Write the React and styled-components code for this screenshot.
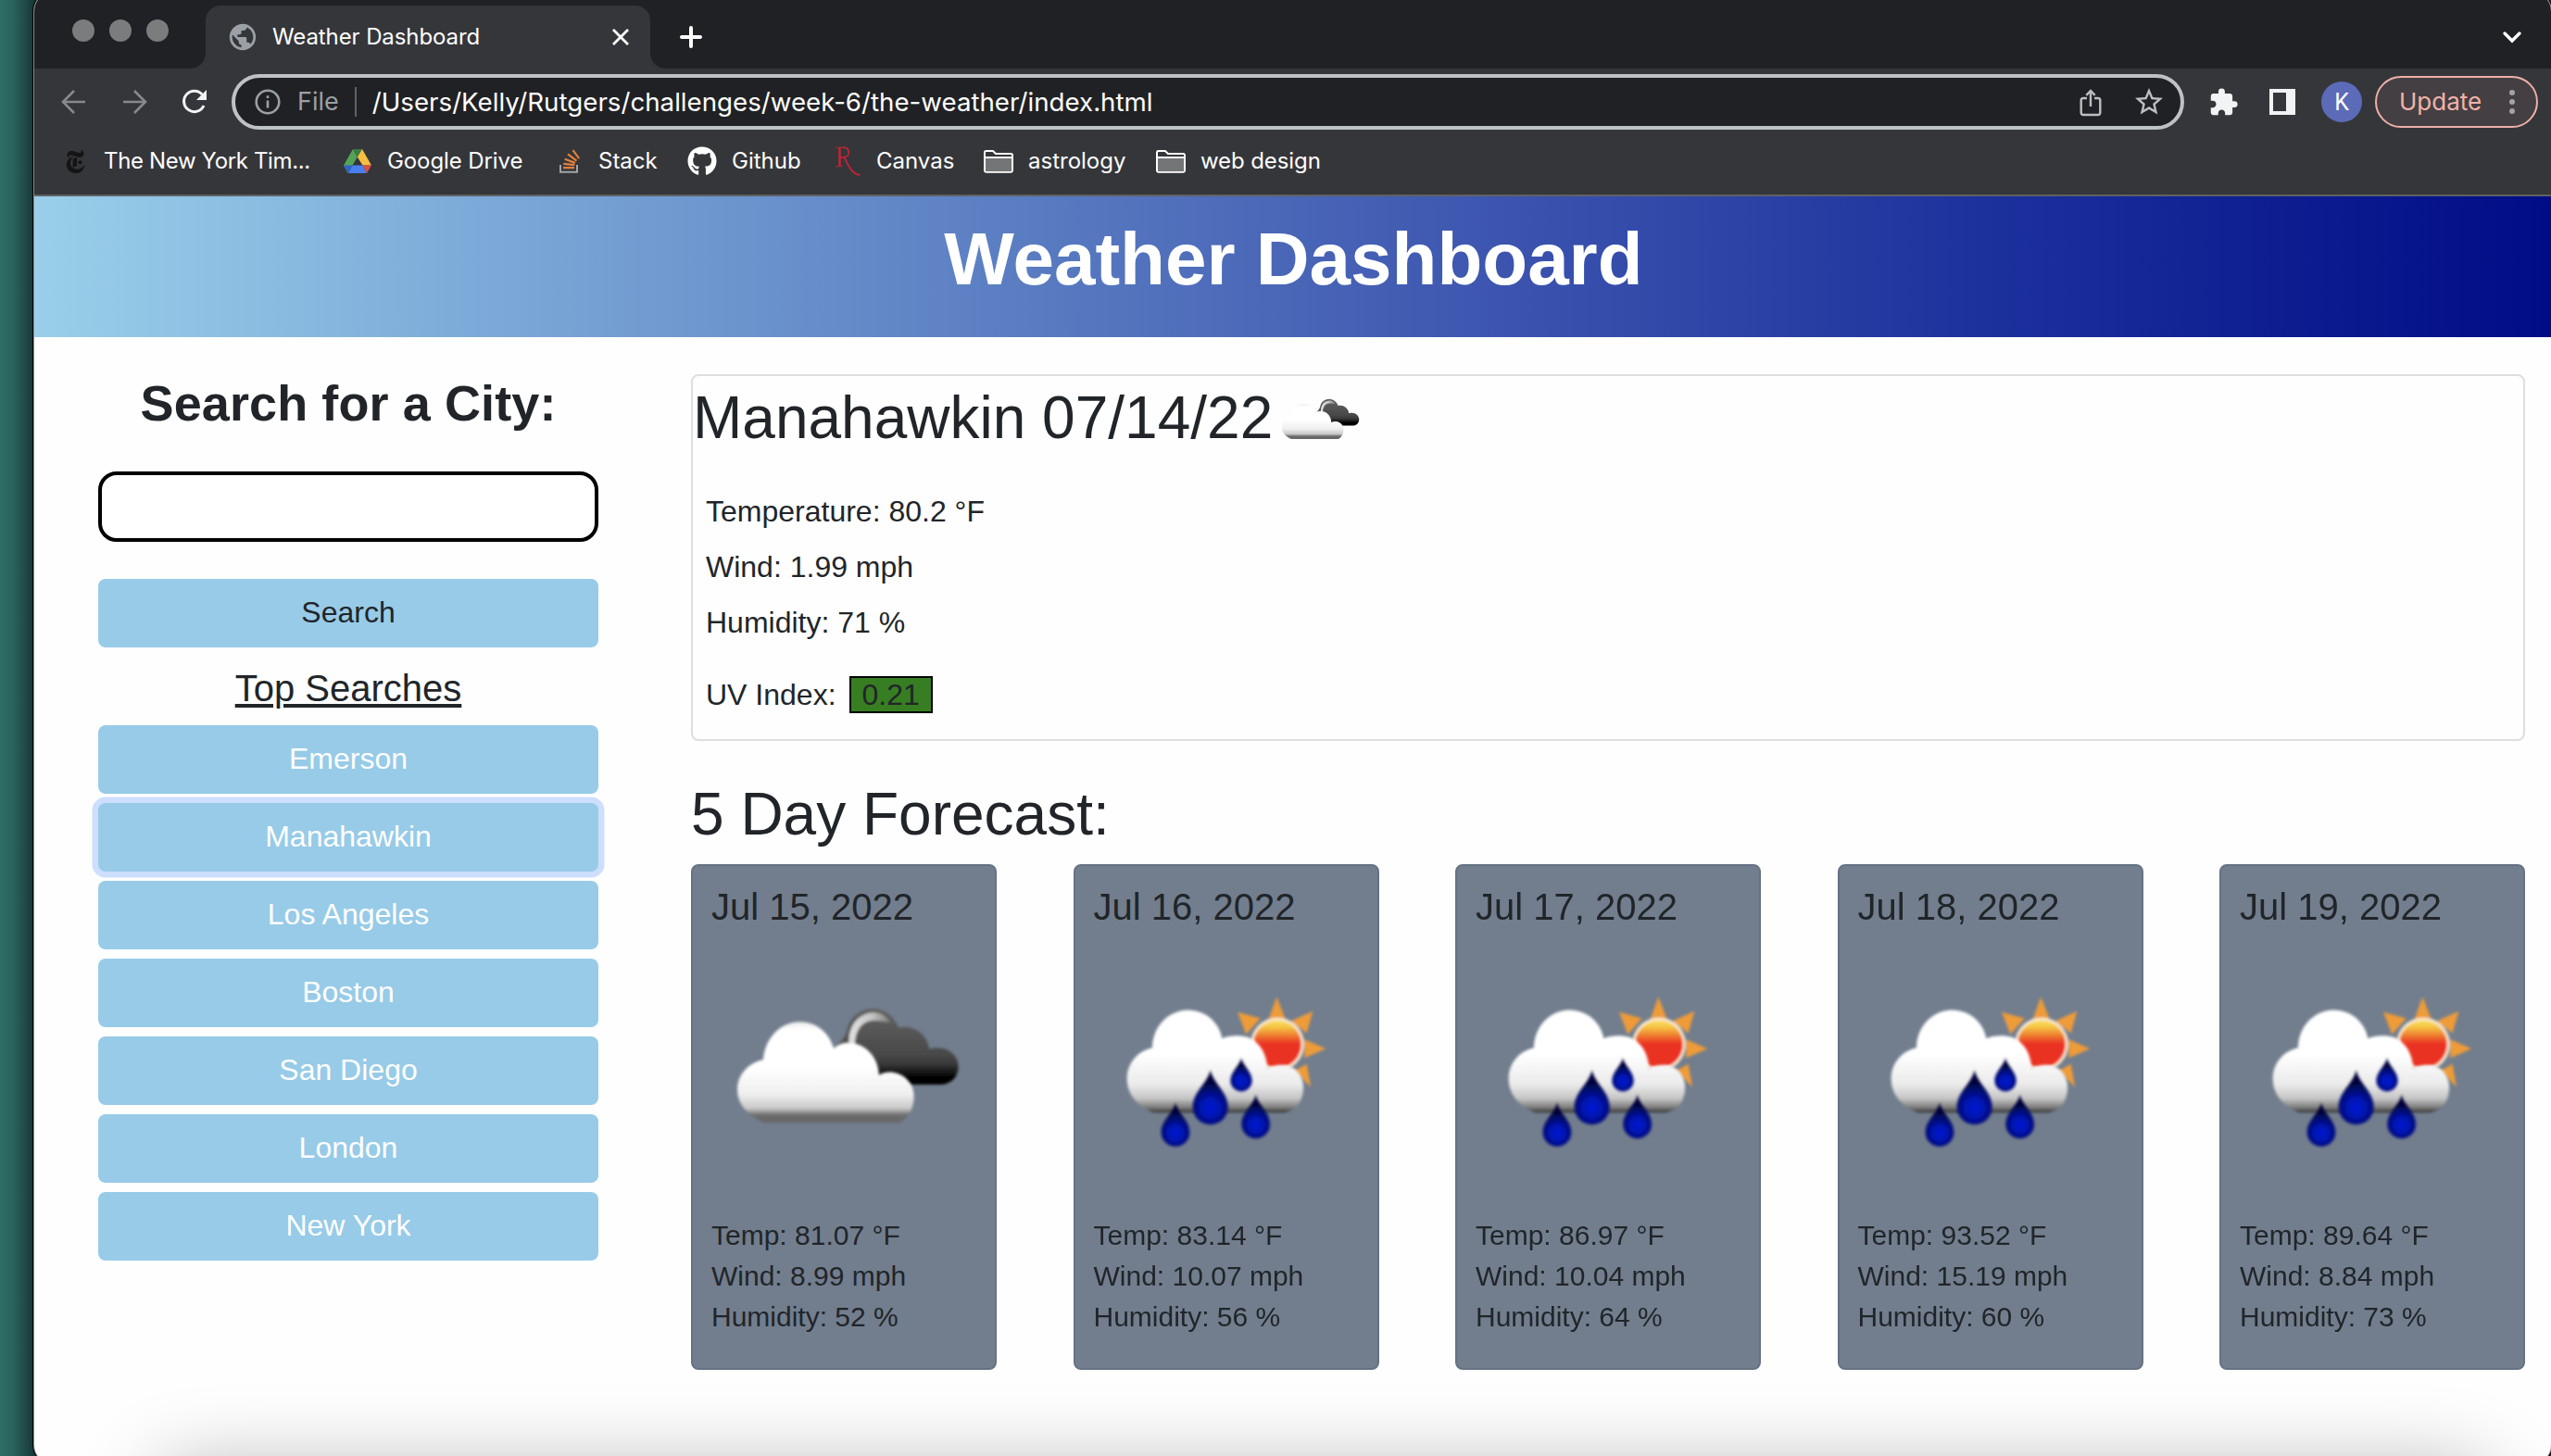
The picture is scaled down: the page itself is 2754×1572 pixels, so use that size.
import React from "react";
import styled, { createGlobalStyle, css } from "styled-components";
import { SiNewyorktimes } from "react-icons/si";
import { FaGithub } from "react-icons/fa";
import { MdExtension, MdPublic, MdStarOutline } from "react-icons/md";

const GlobalStyle = createGlobalStyle`
  * { box-sizing: border-box; }
  body { margin: 0; overflow: hidden; background: #2f6f69; }
  h1, h2, h3, h4, p, ul { margin: 0; padding: 0; font-weight: 400; }
  svg { display: block; flex: none; }
`;

const pageFont = `"Liberation Sans", Arial, sans-serif`;
const chromeFont = `Inter, Roboto, sans-serif`;

/* ---------- Desktop and window ---------- */

const Desktop = styled.div`
  position: relative;
  width: 2754px;
  height: 1572px;
  padding-left: 37px;
  overflow: hidden;
  background: linear-gradient(90deg, #2f6d67 0, #2a625c 14px, #1f4b47 27px, #19393a 35px, #19393a 100%);
`;

const BrowserWindow = styled.div`
  display: flex;
  flex-direction: column;
  height: 1588px;
  margin-top: -8px;
  border-radius: 20px;
  overflow: hidden;
  background: #fefefe;
  box-shadow: 0 0 0 1px #8a8d8c, 0 0 0 2px #000;
`;

const DockShadow = styled.div`
  position: absolute;
  left: 175px;
  right: 72px;
  top: 1590px;
  height: 200px;
  box-shadow: 0 0 90px rgba(0, 0, 0, 0.33);
`;

/* ---------- Browser chrome ---------- */

const TabStrip = styled.div`
  display: flex;
  align-items: flex-end;
  height: 82px;
  padding-right: 30px;
  background: #202124;
`;

const Lights = styled.div`
  display: flex;
  gap: 16px;
  width: 185px;
  height: 53px;
  padding-left: 41px;
`;

const StripCell = styled.div`
  display: flex;
  align-items: center;
  height: 68px;
  margin-left: ${(p) => p.$push};
`;

const Light = styled.span`
  width: 24px;
  height: 24px;
  border-radius: 50%;
  background: #7b7c7e;
`;

const Tab = styled.div`
  position: relative;
  display: flex;
  align-items: center;
  width: 480px;
  height: 68px;
  padding: 0 23px 0 23px;
  border-radius: 16px 16px 0 0;
  background: #35363a;

  &::before,
  &::after {
    content: "";
    position: absolute;
    bottom: 0;
    width: 16px;
    height: 16px;
  }
  &::before {
    left: -16px;
    background: radial-gradient(circle at 0 0, transparent 15.5px, #35363a 16px);
  }
  &::after {
    right: -16px;
    background: radial-gradient(circle at 100% 0, transparent 15.5px, #35363a 16px);
  }
`;

const TabTitle = styled.span`
  flex: 1;
  margin-left: 15px;
  font: 400 24px/30px ${chromeFont};
  letter-spacing: -0.1px;
  color: #fff;
  white-space: nowrap;
`;

const Toolbar = styled.div`
  display: flex;
  align-items: center;
  height: 72px;
  padding: 0 14px 0 29px;
  background: #35363a;
`;

const NavButtons = styled.div`
  display: flex;
  align-items: center;
  gap: 37px;
  width: 184px;
`;

const AddressBar = styled.div`
  display: flex;
  align-items: center;
  width: 2108px;
  height: 60px;
  padding: 0 16px 0 21px;
  border: 4px solid #bfc2c5;
  border-radius: 30px;
  background: #202124;
`;

const Scheme = styled.span`
  margin-left: 18px;
  padding-right: 17px;
  border-right: 2px solid #5f6368;
  font: 400 27px/32px ${chromeFont};
  color: #9aa0a6;
`;

const Url = styled.span`
  flex: 1;
  margin-left: 17px;
  font: 400 27.7px/32px ${chromeFont};
  color: #fff;
  white-space: nowrap;
`;

const StarIcon = styled(MdStarOutline)`
  width: 36px;
  height: 36px;
  margin-left: 33px;
  color: #bdbec0;
`;

const PuzzleIcon = styled(MdExtension)`
  width: 33px;
  height: 33px;
  margin-right: 33px;
  color: #f1f3f4;
`;

const Actions = styled.div`
  display: flex;
  align-items: center;
  margin-left: auto;
`;

const Avatar = styled.span`
  display: flex;
  align-items: center;
  justify-content: center;
  width: 44px;
  height: 44px;
  margin: 0 14px 0 28px;
  border-radius: 50%;
  background: #5c6bb8;
  color: #fff;
  font: 400 25px/1 Roboto, sans-serif;
`;

const UpdatePill = styled.span`
  display: flex;
  align-items: center;
  justify-content: space-between;
  width: 176px;
  height: 56px;
  padding: 0 23px 0 24px;
  border: 2px solid #eeb0a8;
  border-radius: 28px;
  background: #443f42;
  color: #f0b3ab;
  font: 400 26px/1 ${chromeFont};
`;

const BookmarksBar = styled.div`
  display: flex;
  align-items: center;
  height: 66px;
  padding: 0 0 8px 32px;
  border-bottom: 2px solid #5f6164;
  background: #35363a;
`;

const Bookmark = styled.div`
  display: flex;
  align-items: center;
  gap: ${(p) => p.$gap}px;
  width: ${(p) => p.$width}px;
  font: 400 24px/30px ${chromeFont};
  letter-spacing: ${(p) => p.$tracking || 0}px;
  color: #fff;
  white-space: nowrap;
`;

/* ---------- Web page ---------- */

const Banner = styled.header`
  height: 152px;
  padding: 20px 0 0 2px;
  background: linear-gradient(90deg, #99cfea 0, #6d96ce 27%, #4059b1 56%, #1c309c 78%, #000c86 100%);
  text-align: center;
`;

const BannerTitle = styled.h1`
  font: 700 80px/96px ${pageFont};
  color: #fff;
`;

const Page = styled.main`
  display: flex;
  flex: 1;
  color: #212529;
  font-family: ${pageFont};
`;

const Sidebar = styled.aside`
  display: flex;
  flex-direction: column;
  width: 609px;
  margin-right: 100px;
  padding: 39px 0 0 69px;
  text-align: center;
`;

const SidebarTitle = styled.h2`
  font: 700 54px/64px ${pageFont};
  letter-spacing: 0.1px;
`;

const CityInput = styled.input`
  height: 76px;
  margin: 42px 0 40px;
  border: 4px solid #000;
  border-radius: 20px;
  background: #fff;
`;

const CityButton = styled.button`
  height: 74px;
  margin: 0;
  padding: 0 0 3px;
  border: 0;
  border-radius: 8px;
  background: #97cbe8;
  color: ${(p) => (p.$dark ? "#212529" : "#fff")};
  font: 400 32px/48px ${pageFont};
  ${(p) =>
    p.$focused &&
    css`
      box-shadow: 0 0 0 6.5px #cddefe;
    `}
`;

const TopSearches = styled.h3`
  margin: 20px 0 16px;
  font: 400 40px/48px ${pageFont};
  text-decoration: underline;
  text-decoration-thickness: 4px;
  text-underline-offset: 3px;
`;

const CityList = styled.div`
  display: flex;
  flex-direction: column;
  gap: 10px;
`;

const Content = styled.section`
  width: 1980px;
  padding-top: 40px;
`;

const CurrentCard = styled.section`
  height: 396px;
  border: 2px solid #dedede;
  border-radius: 8px;
`;

const CurrentTitle = styled.h2`
  display: flex;
  align-items: center;
  height: 96px;
  font: 400 64px/77px ${pageFont};
  white-space: pre;
`;

const CurrentTitleText = styled.span`
  padding-bottom: 5px;
`;

const CurrentStat = styled.p`
  display: flex;
  align-items: center;
  height: 60px;
  padding-left: 14px;
  margin-top: ${(p) => p.$top || 0}px;
  font: 400 32px/48px ${pageFont};
`;

const UvBadge = styled.span`
  width: 90px;
  height: 40px;
  margin-left: 14px;
  padding-left: 12px;
  border: 2px solid #000;
  background: #377e22;
  line-height: 36px;
`;

const ForecastTitle = styled.h2`
  margin: 41px 0 15px;
  font: 400 64px/77px ${pageFont};
`;

const ForecastRow = styled.div`
  display: flex;
  justify-content: space-between;
`;

const DayCard = styled.article`
  display: flex;
  flex-direction: column;
  width: 330px;
  height: 546px;
  padding: 20px 20px;
  border: 2px solid #667284;
  border-radius: 8px;
  background: #727e8e;
`;

const DayDate = styled.h3`
  font: 400 40px/48px ${pageFont};
`;

const DayIcon = styled.div`
  margin: 9px 0 14px;
`;

const DayStat = styled.p`
  font: 400 30px/44px ${pageFont};
`;

/* ---------- Icons ---------- */

const CloseIcon = () => (
  <svg width="18" height="18" viewBox="0 0 18 18" stroke="#fff" strokeWidth="2.800">
    <path d="M1 1l16 16M17 1L1 17" />
  </svg>
);

const PlusIcon = () => (
  <svg width="24" height="24" viewBox="0 0 24 24" stroke="#fff" strokeWidth="4" strokeLinecap="round">
    <path d="M12 2v20M2 12h20" />
  </svg>
);

const ChevronIcon = () => (
  <svg width="24" height="14" viewBox="0 0 24 14" fill="none" stroke="#fff" strokeWidth="3.400" strokeLinecap="round">
    <path d="M4 3l8 8 8-8" />
  </svg>
);

const ArrowIcon = ({ flip }) => (
  <svg width="28" height="28" viewBox="0 0 28 28" fill="none" stroke="#87898c" strokeWidth="2.600">
    <path d={flip ? "M2 14h23M14 2l12 12-12 12" : "M26 14H3M14 2L2 14l12 12"} />
  </svg>
);

const ReloadIcon = () => (
  <svg width="28" height="28" viewBox="0 0 28 28">
    <path d="M24 18a11.200 11.200 0 1 1-1.800-12" fill="none" stroke="#f1f3f4" strokeWidth="3" />
    <path d="M27 1v11H16z" fill="#f1f3f4" />
  </svg>
);

const InfoIcon = () => (
  <svg width="28" height="28" viewBox="0 0 28 28">
    <circle cx="14" cy="14" r="12.300" fill="none" stroke="#9aa0a6" strokeWidth="2.600" />
    <path d="M14 12.500v8M14 7.300v2.600" stroke="#9aa0a6" strokeWidth="2.600" />
  </svg>
);

const ShareIcon = () => (
  <svg width="24" height="32" viewBox="0 0 24 32" fill="none" stroke="#bdbec0" strokeWidth="2.400">
    <path d="M8 12H4a2.300 2.300 0 0 0-2.300 2.300v13.400A2.300 2.300 0 0 0 4 30h16a2.300 2.300 0 0 0 2.300-2.300V14.300a2.300 2.300 0 0 0-2.300-2.300h-4" />
    <path d="M12 21V4M7.300 8.800L12 4l4.700 4.800" />
  </svg>
);

const SidePanelIcon = () => (
  <svg width="28" height="28" viewBox="0 0 28 28">
    <path fillRule="evenodd" d="M0 0h28v28H0zM4 4v20h14V4z" fill="#f1f3f4" />
  </svg>
);

const DotsIcon = () => (
  <svg width="6" height="28" viewBox="0 0 6 28" fill="#a3a2a4">
    <circle cx="3" cy="4" r="3" />
    <circle cx="3" cy="14" r="3" />
    <circle cx="3" cy="24" r="3" />
  </svg>
);

const DriveIcon = () => (
  <svg width="30" height="26" viewBox="0 0 30 26">
    <path d="M10 0L0 17.500 4.500 26l10.300-17.500z" fill="#53a458" />
    <path d="M10 0h10l-5.200 8.500z" fill="#3a7d44" />
    <path d="M20 0l10 17.500h-9.500L14.800 8.500z" fill="#f3be42" />
    <path d="M9.500 17.500h11L25 26H5z" fill="#4a80ec" />
    <path d="M0 17.500h9.500L5 26z" fill="#2f62c9" />
    <path d="M20.500 17.500H30L25 26z" fill="#dc5040" />
  </svg>
);

const StackIcon = () => (
  <svg width="22" height="26" viewBox="0 0 22 26" fill="none">
    <path d="M1 17v7.800h18V17" stroke="#a2a4a7" strokeWidth="2" />
    <path d="M4 20.200h12M4.300 15.800l12 1.300M5.700 10.700l11.200 4.200M9 5.300l9.500 7.400M14.500 1.200l6.700 9" stroke="#e2813c" strokeWidth="2.200" />
  </svg>
);

const RutgersIcon = () => (
  <svg width="28" height="32" viewBox="0 0 28 32" fill="none" stroke="#c02536">
    <path d="M0.500 1.200h9M0.500 21.700h7" strokeWidth="1" />
    <path d="M4.500 1.500v20" strokeWidth="2.600" />
    <path d="M8 1.200c4.500 0 6.300 2.200 6.300 5.200s-2.300 5.500-6.300 5.500H5" strokeWidth="1.700" />
    <path d="M9.500 12c4 8 7.500 17.500 17 19" strokeWidth="1.900" />
  </svg>
);

const FolderIcon = () => (
  <svg width="32" height="25" viewBox="0 0 32 25">
    <path d="M1 22V2.500A1.500 1.500 0 0 1 2.500 1H10l3 3h16.500A1.500 1.500 0 0 1 31 5.500V22a1.800 1.800 0 0 1-1.800 1.800H2.800A1.800 1.800 0 0 1 1 22z" fill="#35363a" stroke="#fff" strokeWidth="2" />
    <path d="M2 9h28v14H2z" fill="#747577" />
    <path d="M1 8h30" stroke="#fff" strokeWidth="2" />
  </svg>
);

const CloudsIcon = ({ size, id }) => (
  <svg width={size} height={size} viewBox="0 0 286 286">
    <defs>
      <linearGradient id={`${id}-front`} gradientUnits="userSpaceOnUse" x1="0" y1="100" x2="0" y2="425">
        <stop offset="0" stopColor="#ececec" />
        <stop offset="0.080" stopColor="#fff" />
        <stop offset="0.450" stopColor="#fff" />
        <stop offset="0.720" stopColor="#efefef" />
        <stop offset="0.860" stopColor="#c8c8c8" />
        <stop offset="0.930" stopColor="#6a6a6a" />
        <stop offset="1" stopColor="#666" />
      </linearGradient>
      <linearGradient id={`${id}-back`} gradientUnits="userSpaceOnUse" x1="0" y1="60" x2="0" y2="305">
        <stop offset="0" stopColor="#626262" />
        <stop offset="0.600" stopColor="#484848" />
        <stop offset="0.720" stopColor="#383838" />
        <stop offset="0.880" stopColor="#050505" />
        <stop offset="1" stopColor="#000" />
      </linearGradient>
      <linearGradient id={`${id}-rim`} gradientUnits="userSpaceOnUse" x1="410" y1="0" x2="545" y2="0">
        <stop offset="0" stopColor="#e2e2e2" />
        <stop offset="0.550" stopColor="#c4c4c4" />
        <stop offset="1" stopColor="#7a7a7a" />
      </linearGradient>
      <filter id={`${id}-soft`} x="-10%" y="-10%" width="120%" height="120%">
        <feGaussianBlur stdDeviation="5" />
      </filter>
    </defs>
    <g transform="translate(12 58) scale(0.33333)">
      <g filter={`url(#${id}-soft)`}>
        <path
          d="M360 190C385 160 400 150 405 120C415 80 450 56 488 56C528 58 555 82 570 118C615 108 662 135 670 188C720 172 762 202 764 242C764 278 740 303 705 303L600 303L480 280Z"
          fill={`url(#${id}-back)`}
        />
        <path d="M412 180C402 130 430 72 490 70C512 70 530 82 545 102C510 96 488 92 468 100C438 112 428 145 428 185Z" fill={`url(#${id}-rim)`} />
      </g>
      <g filter={`url(#${id}-soft)`}>
        <path
          d="M135 427C88 405 48 372 48 318C48 270 85 232 132 222C138 150 190 100 250 100C305 100 345 135 360 185C375 172 395 166 415 168C465 172 505 215 507 272C520 264 540 261 555 264C595 271 622 305 620 345C618 385 600 412 572 427Z"
          fill={`url(#${id}-front)`}
        />
      </g>
    </g>
  </svg>
);

const Drop = ({ x, y, r, fill }) => (
  <path
    transform={`translate(${x} ${y}) scale(${r})`}
    d="M0 -2.050C0.150 -1.300 1 -0.800 1 0.050A1 1 0 0 1 -1 0.050C-1 -0.800 -0.150 -1.300 0 -2.050Z"
    fill={fill}
  />
);

const RainIcon = ({ size, id }) => (
  <svg width={size} height={size} viewBox="0 0 286 286">
    <defs>
      <linearGradient id={`${id}-cloud`} gradientUnits="userSpaceOnUse" x1="0" y1="155" x2="0" y2="485">
        <stop offset="0" stopColor="#fff" />
        <stop offset="0.420" stopColor="#fff" />
        <stop offset="0.720" stopColor="#ebebeb" />
        <stop offset="0.860" stopColor="#c6c6c6" />
        <stop offset="0.950" stopColor="#7c7c7c" />
        <stop offset="1" stopColor="#333" />
      </linearGradient>
      <linearGradient id={`${id}-sun`} gradientUnits="userSpaceOnUse" x1="0" y1="183" x2="0" y2="340">
        <stop offset="0" stopColor="#f8e261" />
        <stop offset="0.160" stopColor="#f6c544" />
        <stop offset="0.340" stopColor="#ee7a2e" />
        <stop offset="0.500" stopColor="#ea3323" />
        <stop offset="1" stopColor="#ea3323" />
      </linearGradient>
      <radialGradient id={`${id}-drop`} gradientUnits="userSpaceOnUse" cx="0" cy="0.100" r="1.400">
        <stop offset="0" stopColor="#001ad6" />
        <stop offset="0.350" stopColor="#0015b4" />
        <stop offset="0.720" stopColor="#000b74" />
        <stop offset="1" stopColor="#00063c" />
      </radialGradient>
      <filter id={`${id}-soft`} x="-10%" y="-10%" width="120%" height="120%">
        <feGaussianBlur stdDeviation="4.500" />
      </filter>
    </defs>
    <g transform="translate(9 27.500) scale(0.33333)">
      <g filter={`url(#${id}-soft)`}>
        <path
          d="M565 110L594 185H538ZM438 160L512 180L466 232ZM682 157L662 228L612 188ZM724 278L655 308V248ZM675 402L622 350L662 328Z"
          fill="#ee9b38"
        />
        <circle cx="567" cy="264" r="82" fill={`url(#${id}-sun)`} stroke="#fbe9cd" strokeWidth="9" />
      </g>
      <g filter={`url(#${id}-soft)`}>
        <path
          d="M165 485C108 462 80 422 80 375C80 325 115 285 162 275C163 205 215 153 278 153C335 153 380 195 388 245C400 238 430 235 450 237C500 241 532 285 535 342C560 328 600 325 625 345C650 365 656 400 648 430C640 462 620 480 590 485Z"
          fill={`url(#${id}-cloud)`}
        />
      </g>
      <g filter={`url(#${id}-soft)`}>
        <Drop x={350} y={464} r={57} fill={`url(#${id}-drop)`} />
        <Drop x={237} y={547} r={46} fill={`url(#${id}-drop)`} />
        <Drop x={497} y={521} r={46} fill={`url(#${id}-drop)`} />
        <Drop x={450} y={380} r={35} fill={`url(#${id}-drop)`} />
      </g>
    </g>
  </svg>
);

/* ---------- Data ---------- */

const bookmarks = [
  { label: "The New York Tim...", icon: <SiNewyorktimes size={25} color="#141414" />, gap: 18, width: 302, tracking: -0.36 },
  { label: "Google Drive", icon: <DriveIcon />, gap: 17, width: 233, tracking: -0.1 },
  { label: "Stack", icon: <StackIcon />, gap: 20, width: 138 },
  { label: "Github", icon: <FaGithub size={32} color="#fff" />, gap: 16, width: 160 },
  { label: "Canvas", icon: <RutgersIcon />, gap: 16, width: 160 },
  { label: "astrology", icon: <FolderIcon />, gap: 16, width: 186 },
  { label: "web design", icon: <FolderIcon />, gap: 16, width: 200, tracking: -0.1 },
];

const cities = ["Emerson", "Manahawkin", "Los Angeles", "Boston", "San Diego", "London", "New York"];

const forecast = [
  { date: "Jul 15, 2022", Icon: CloudsIcon, temp: "81.07", wind: "8.99", humidity: 52 },
  { date: "Jul 16, 2022", Icon: RainIcon, temp: "83.14", wind: "10.07", humidity: 56 },
  { date: "Jul 17, 2022", Icon: RainIcon, temp: "86.97", wind: "10.04", humidity: 64 },
  { date: "Jul 18, 2022", Icon: RainIcon, temp: "93.52", wind: "15.19", humidity: 60 },
  { date: "Jul 19, 2022", Icon: RainIcon, temp: "89.64", wind: "8.84", humidity: 73 },
];

export default function App() {
  return (
    <Desktop>
      <GlobalStyle />
      <BrowserWindow>
        <TabStrip>
          <Lights>
            <Light />
            <Light />
            <Light />
          </Lights>
          <Tab>
            <MdPublic size={34} color="#9aa0a6" />
            <TabTitle>Weather Dashboard</TabTitle>
            <CloseIcon />
          </Tab>
          <StripCell $push="32px">
            <PlusIcon />
          </StripCell>
          <StripCell $push="auto">
            <ChevronIcon />
          </StripCell>
        </TabStrip>

        <Toolbar>
          <NavButtons>
            <ArrowIcon />
            <ArrowIcon flip />
            <ReloadIcon />
          </NavButtons>
          <AddressBar>
            <InfoIcon />
            <Scheme>File</Scheme>
            <Url>/Users/Kelly/Rutgers/challenges/week-6/the-weather/index.html</Url>
            <ShareIcon />
            <StarIcon />
          </AddressBar>
          <Actions>
            <PuzzleIcon />
            <SidePanelIcon />
            <Avatar>K</Avatar>
            <UpdatePill>
              Update
              <DotsIcon />
            </UpdatePill>
          </Actions>
        </Toolbar>

        <BookmarksBar>
          {bookmarks.map((b) => (
            <Bookmark key={b.label} $gap={b.gap} $width={b.width} $tracking={b.tracking}>
              {b.icon}
              {b.label}
            </Bookmark>
          ))}
        </BookmarksBar>

        <Banner>
          <BannerTitle>Weather Dashboard</BannerTitle>
        </Banner>

        <Page>
          <Sidebar>
            <SidebarTitle>Search for a City:</SidebarTitle>
            <CityInput type="text" aria-label="City" />
            <CityButton $dark>Search</CityButton>
            <TopSearches>Top Searches</TopSearches>
            <CityList>
              {cities.map((city) => (
                <CityButton key={city} $focused={city === "Manahawkin"}>
                  {city}
                </CityButton>
              ))}
            </CityList>
          </Sidebar>

          <Content>
            <CurrentCard>
              <CurrentTitle>
                <CurrentTitleText>Manahawkin 07/14/22</CurrentTitleText>
                <CloudsIcon size={100} id="now" />
              </CurrentTitle>
              <CurrentStat $top={20}>Temperature: 80.2 °F</CurrentStat>
              <CurrentStat>Wind: 1.99 mph</CurrentStat>
              <CurrentStat>Humidity: 71 %</CurrentStat>
              <CurrentStat $top={18}>
                UV Index:
                <UvBadge>0.21</UvBadge>
              </CurrentStat>
            </CurrentCard>

            <ForecastTitle>5 Day Forecast:</ForecastTitle>
            <ForecastRow>
              {forecast.map(({ date, Icon, temp, wind, humidity }, i) => (
                <DayCard key={date}>
                  <DayDate>{date}</DayDate>
                  <DayIcon>
                    <Icon size={286} id={`day${i}`} />
                  </DayIcon>
                  <DayStat>Temp: {temp} °F</DayStat>
                  <DayStat>Wind: {wind} mph</DayStat>
                  <DayStat>Humidity: {humidity} %</DayStat>
                </DayCard>
              ))}
            </ForecastRow>
          </Content>
        </Page>
      </BrowserWindow>
      <DockShadow />
    </Desktop>
  );
}
